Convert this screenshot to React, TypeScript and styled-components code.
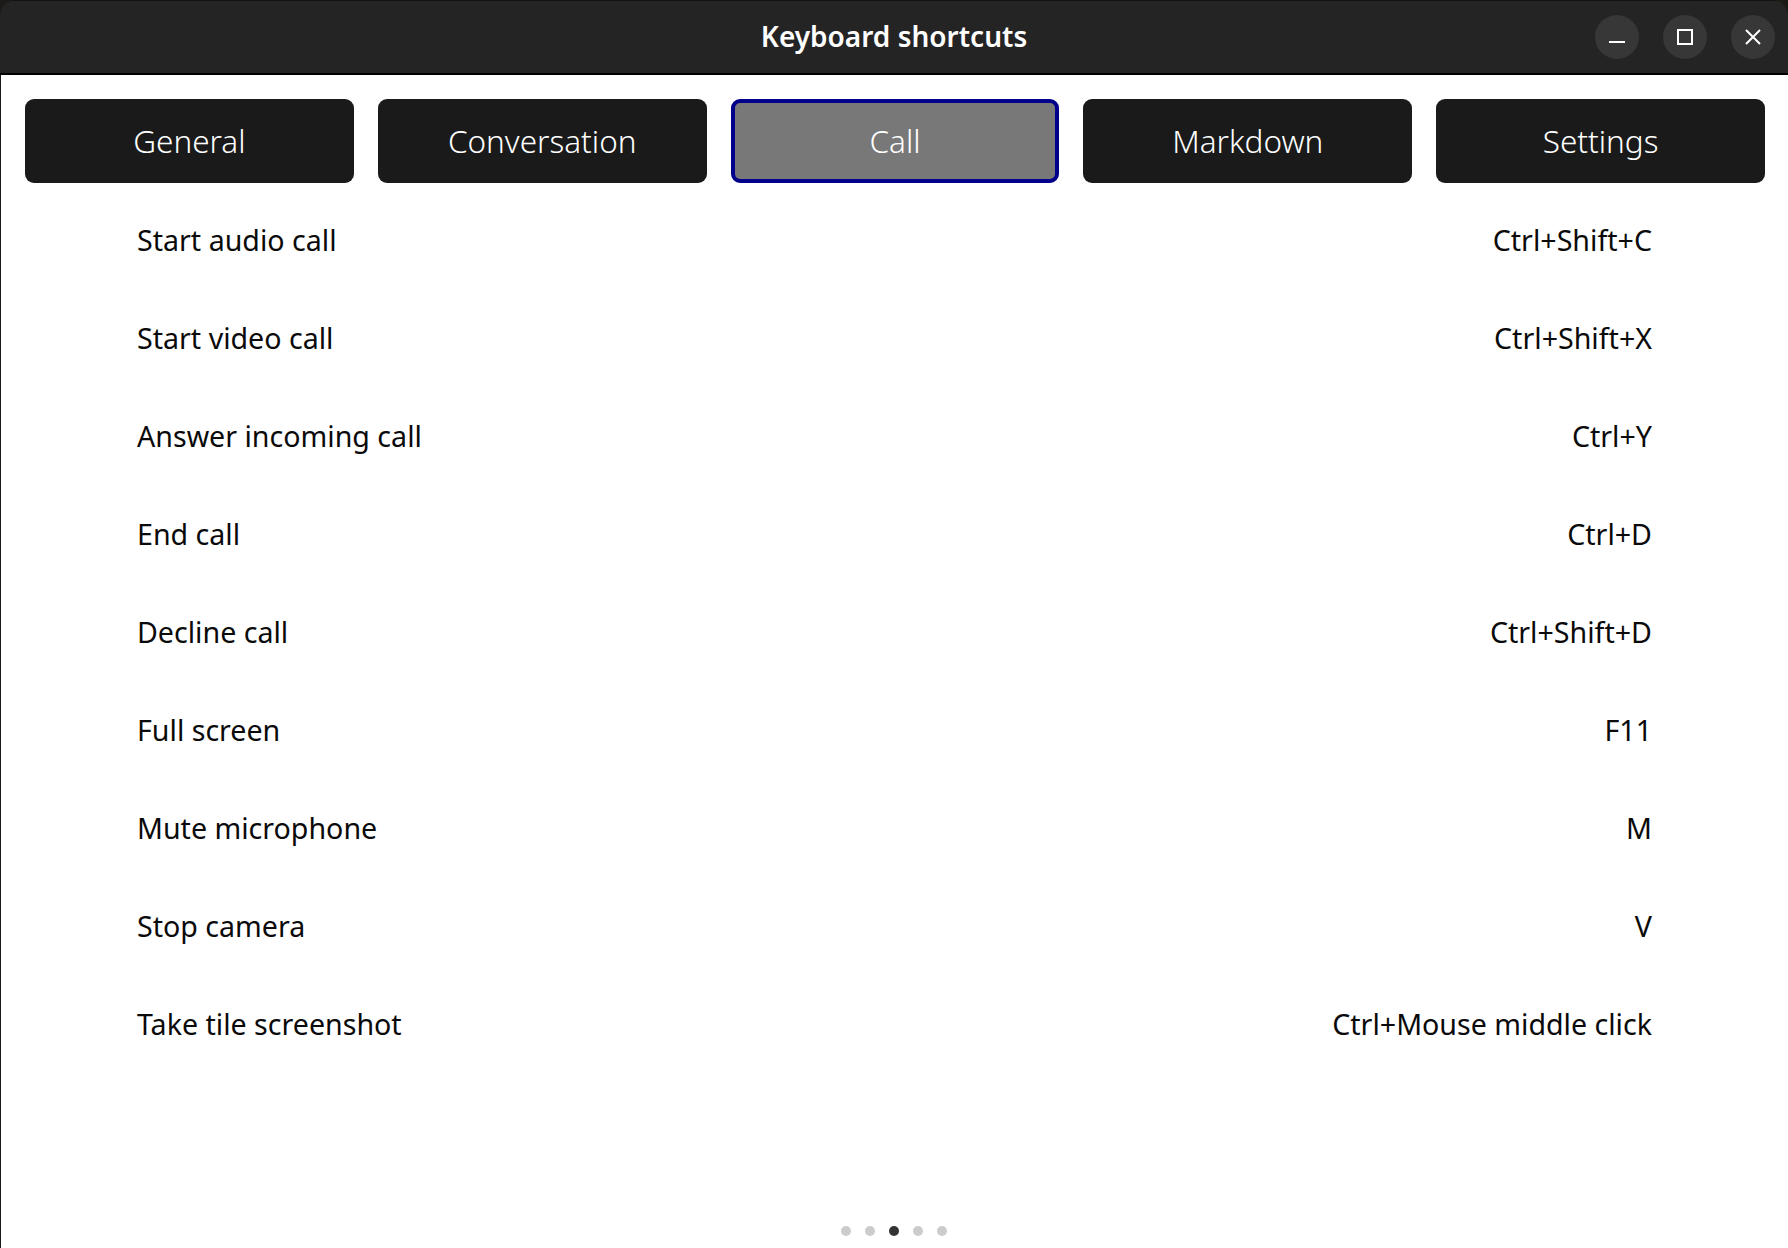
import React from "react";
import styled, { createGlobalStyle } from "styled-components";

const GlobalStyle = createGlobalStyle`
  html, body {
    margin: 0;
    padding: 0;
    background: #ffffff;
  }
  * {
    box-sizing: border-box;
  }
`;

const tabs = ["General", "Conversation", "Call", "Markdown", "Settings"];

const shortcuts = [
  ["Start audio call", "Ctrl+Shift+C"],
  ["Start video call", "Ctrl+Shift+X"],
  ["Answer incoming call", "Ctrl+Y"],
  ["End call", "Ctrl+D"],
  ["Decline call", "Ctrl+Shift+D"],
  ["Full screen", "F11"],
  ["Mute microphone", "M"],
  ["Stop camera", "V"],
  ["Take tile screenshot", "Ctrl+Mouse middle click"],
];

export default function App() {
  return (
    <>
      <GlobalStyle />
      <Outer>
        <Window>
          <TitleBar>
            <Title>Keyboard shortcuts</Title>
            <WindowControls>
              <ControlButton>
                <svg width="16" height="16" viewBox="0 0 16 16">
                  <path d="M0 13h16" stroke="#fff" strokeWidth="2" />
                </svg>
              </ControlButton>
              <ControlButton>
                <svg width="16" height="16" viewBox="0 0 16 16">
                  <path d="M1 1h14v14H1z" stroke="#fff" strokeWidth="2" fill="none" />
                </svg>
              </ControlButton>
              <ControlButton>
                <svg width="16" height="16" viewBox="0 0 16 16">
                  <path d="M1 1l14 14M15 1L1 15" stroke="#fff" strokeWidth="2" />
                </svg>
              </ControlButton>
            </WindowControls>
          </TitleBar>
          <Content>
            <TabBar>
              {tabs.map((tab) => (
                <Tab key={tab} $active={tab === "Call"}>
                  {tab}
                </Tab>
              ))}
            </TabBar>
            <ShortcutList>
              {shortcuts.map(([name, keys]) => (
                <ShortcutRow key={name}>
                  <span>{name}</span>
                  <span>{keys}</span>
                </ShortcutRow>
              ))}
            </ShortcutList>
            <Pager>
              {tabs.map((tab) => (
                <PagerDot key={tab} $active={tab === "Call"} />
              ))}
            </Pager>
          </Content>
        </Window>
      </Outer>
    </>
  );
}

const Outer = styled.div`
  width: 1788px;
  height: 1248px;
  overflow: hidden;
  background: #1c1a17;
`;

const Window = styled.div`
  width: 100%;
  height: 100%;
  display: flex;
  flex-direction: column;
  border-radius: 16px 16px 0 0;
  overflow: hidden;
  font-family: "Noto Sans", "Open Sans", sans-serif;
`;

const TitleBar = styled.header`
  height: 75px;
  flex: none;
  display: flex;
  align-items: center;
  justify-content: center;
  position: relative;
  background: #242424;
  border-top: 1px solid #111111;
  border-bottom: 2px solid #000000;
`;

const Title = styled.h1`
  margin: 0 0 3px;
  color: #ffffff;
  font-size: 28px;
  font-weight: 600;
`;

const WindowControls = styled.div`
  position: absolute;
  top: 14px;
  right: 13px;
  display: flex;
  gap: 24px;
`;

const ControlButton = styled.div`
  width: 44px;
  height: 44px;
  border-radius: 50%;
  background: #373737;
  display: flex;
  align-items: center;
  justify-content: center;
`;

const Content = styled.main`
  flex: 1;
  display: flex;
  flex-direction: column;
  background: #ffffff;
  border-left: 1px solid #1c1a17;
`;

const TabBar = styled.nav`
  display: grid;
  grid-template-columns: repeat(5, 1fr);
  gap: 24px;
  padding: 24px 23px 0 24px;
`;

const Tab = styled.div<{ $active?: boolean }>`
  height: 84px;
  display: flex;
  align-items: center;
  justify-content: center;
  padding-bottom: 2px;
  border-radius: 9px;
  color: #ffffff;
  font-size: 31.5px;
  font-weight: 300;
  background: ${(p) => (p.$active ? "#787878" : "#1a1a1a")};
  border: ${(p) => (p.$active ? "4px solid #00008b" : "none")};
`;

const ShortcutList = styled.div`
  flex: 1;
  padding: 7px 136px 0 136px;
  display: flex;
  flex-direction: column;
`;

const ShortcutRow = styled.div`
  height: 98px;
  display: flex;
  align-items: center;
  justify-content: space-between;
  color: #0a0a0a;
  font-size: 28.6px;
  font-weight: 400;
`;

const Pager = styled.div`
  height: 22px;
  display: flex;
  justify-content: center;
  gap: 14px;
  padding-right: 1px;
`;

const PagerDot = styled.span<{ $active?: boolean }>`
  width: 10px;
  height: 10px;
  border-radius: 50%;
  background: ${(p) => (p.$active ? "#333333" : "#cccccc")};
`;
